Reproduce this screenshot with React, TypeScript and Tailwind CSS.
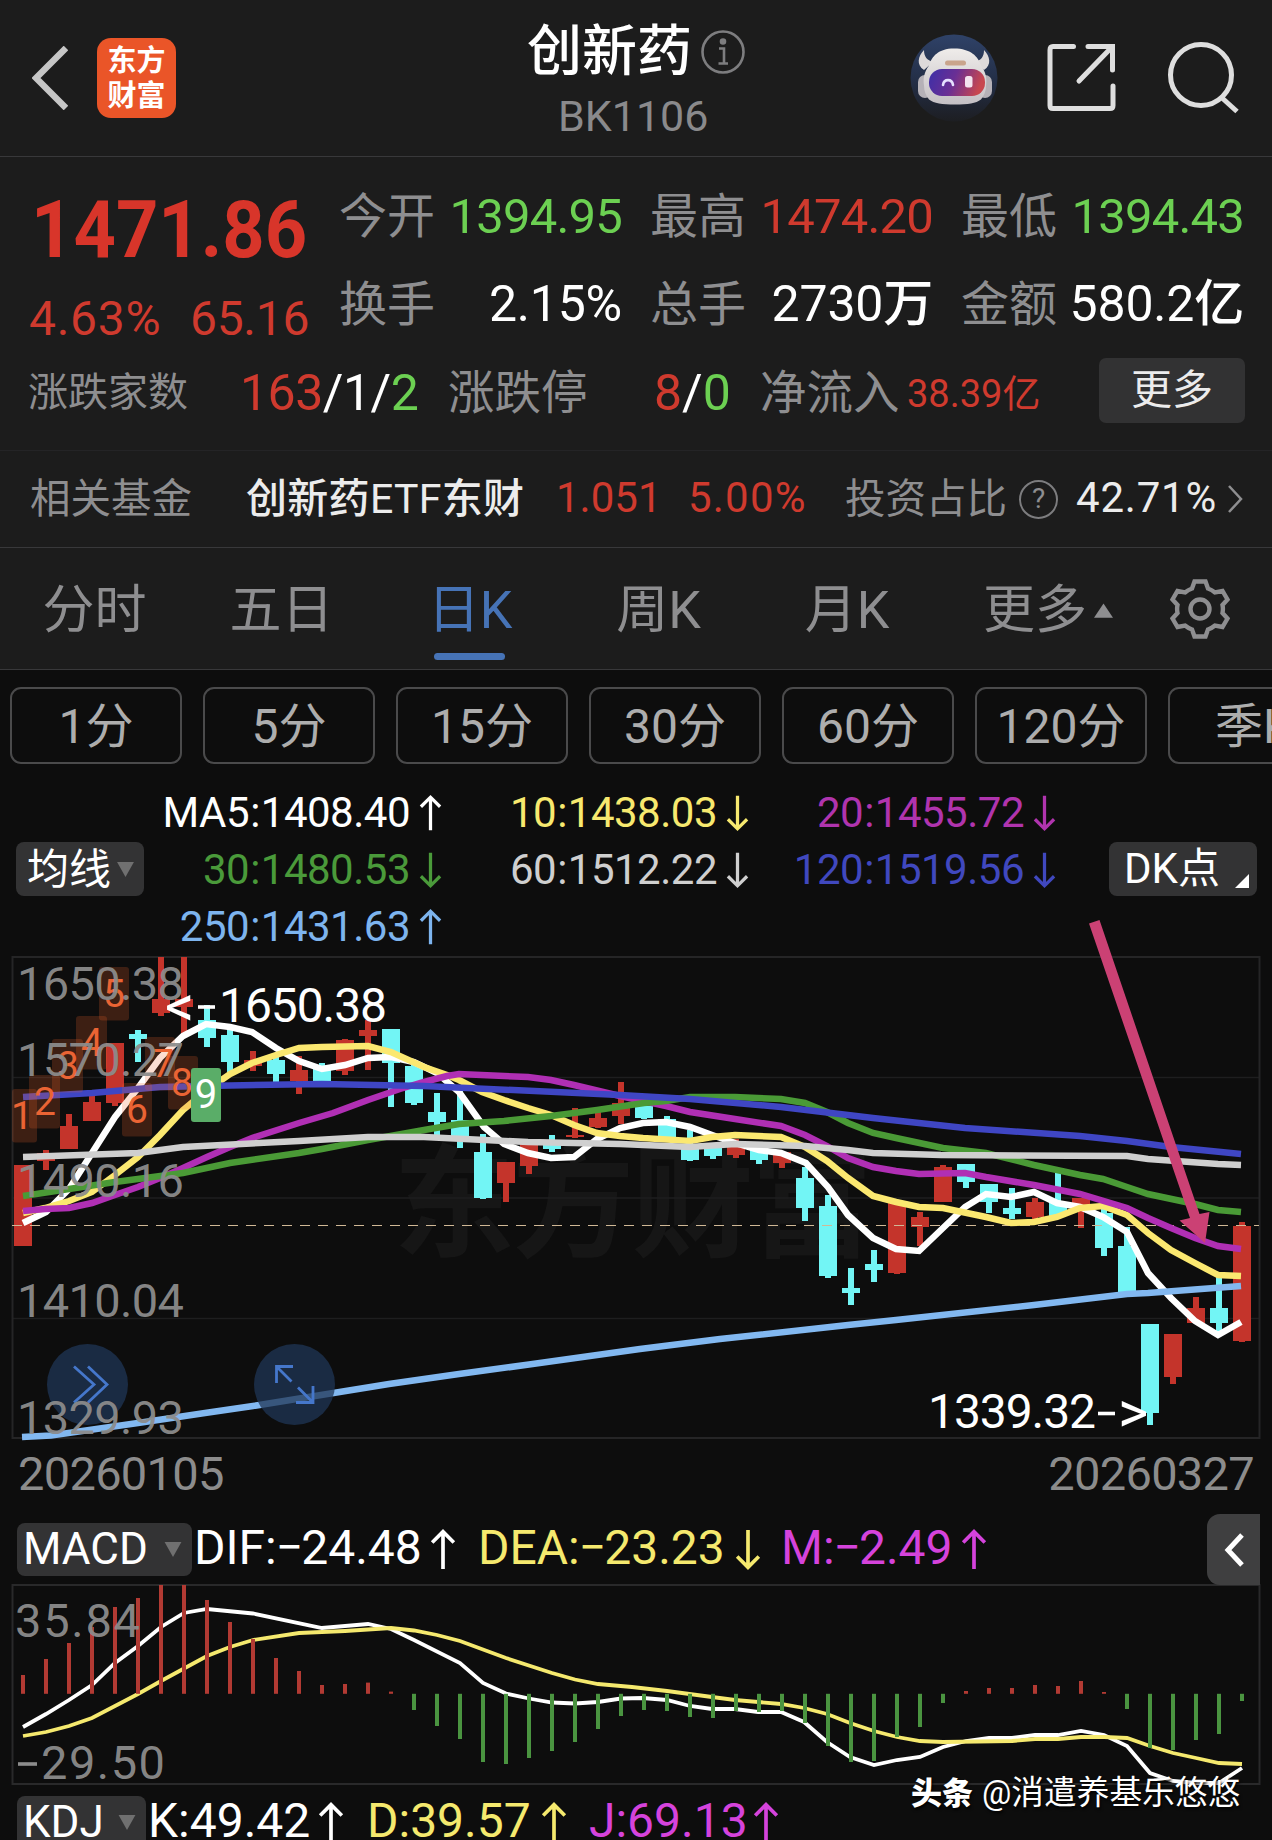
import React from "react";

/* ---------- data ---------- */

type Candle = [up: 0 | 1, high: number, top: number, bottom: number, low: number];

const STEP = 23;
const cx = (i: number) => 23 + STEP * i;

const candles: Candle[] = [
  [1, 1165, 1165, 1246, 1246], [1, 1150, 1153, 1161, 1170], [1, 1114, 1126, 1149, 1149],
  [1, 1093, 1102, 1121, 1121], [1, 1043, 1043, 1103, 1106], [0, 1030, 1034, 1039, 1062],
  [1, 957, 999, 1013, 1016], [1, 957, 999, 1007, 1035], [0, 1005, 1020, 1038, 1047],
  [0, 1026, 1035, 1062, 1072], [1, 1051, 1060, 1066, 1071], [0, 1055, 1060, 1074, 1087],
  [1, 1056, 1070, 1081, 1094], [0, 1063, 1067, 1082, 1086], [1, 1039, 1040, 1071, 1075],
  [1, 1020, 1030, 1036, 1070], [0, 1029, 1029, 1063, 1107], [0, 1065, 1066, 1103, 1105],
  [0, 1093, 1112, 1122, 1135], [0, 1087, 1120, 1137, 1148], [0, 1134, 1152, 1198, 1199],
  [1, 1162, 1162, 1183, 1202], [1, 1142, 1142, 1166, 1174], [0, 1135, 1143, 1149, 1152],
  [1, 1108, 1135, 1137, 1138], [1, 1112, 1118, 1127, 1128], [1, 1082, 1103, 1116, 1124],
  [0, 1106, 1106, 1118, 1119], [0, 1116, 1119, 1138, 1138], [0, 1130, 1147, 1160, 1161],
  [0, 1148, 1148, 1156, 1159], [1, 1139, 1141, 1155, 1158], [0, 1143, 1145, 1160, 1164],
  [1, 1151, 1152, 1163, 1168], [0, 1167, 1178, 1208, 1221], [0, 1195, 1206, 1276, 1278],
  [0, 1268, 1288, 1293, 1305], [0, 1250, 1264, 1270, 1282], [1, 1203, 1203, 1273, 1274],
  [1, 1212, 1217, 1227, 1246], [1, 1165, 1167, 1202, 1202], [0, 1164, 1164, 1182, 1188],
  [0, 1184, 1184, 1202, 1213], [0, 1188, 1208, 1214, 1219], [1, 1198, 1202, 1217, 1219],
  [0, 1172, 1202, 1216, 1217], [1, 1198, 1198, 1206, 1228], [0, 1208, 1213, 1248, 1256],
  [0, 1227, 1246, 1292, 1292], [0, 1324, 1324, 1413, 1425], [1, 1334, 1334, 1377, 1384],
  [1, 1297, 1308, 1323, 1323], [0, 1277, 1308, 1323, 1332], [1, 1222, 1226, 1341, 1342],
];

const ma: { color: string; points: string }[] = [
  { color: "#ffffff", points: "23,1223 46,1212 69,1189 92,1153 115,1117 138,1088 160,1058 183,1036 206,1024 230,1027 252,1032 276,1048 299,1061 322,1069 345,1065 368,1058 391,1057 414,1062 437,1073 459,1092 484,1127 504,1144 528,1153 551,1158 574,1157 597,1139 620,1128 643,1123 666,1122 690,1127 712,1135 735,1143 759,1150 781,1153 806,1163 828,1187 848,1215 873,1238 896,1249 919,1251 943,1228 965,1207 986,1194 1011,1197 1034,1192 1057,1203 1080,1207 1103,1217 1127,1232 1148,1273 1171,1298 1195,1321 1218,1335 1241,1322" },
  { color: "#fbe870", points: "23,1213 45,1208 69,1201 92,1192 115,1175 138,1157 160,1135 183,1110 207,1090 230,1074 252,1063 276,1055 299,1048 322,1047 368,1046 391,1052 424,1067 447,1075 459,1080 482,1092 504,1100 528,1108 551,1115 574,1125 597,1133 620,1136 643,1138 690,1141 712,1137 735,1135 781,1137 805,1147 827,1161 848,1178 873,1196 896,1202 919,1207 943,1208 986,1217 1011,1223 1034,1222 1057,1217 1080,1208 1103,1206 1127,1215 1148,1233 1171,1250 1195,1263 1218,1275 1241,1276" },
  { color: "#b02fb4", points: "23,1211 45,1209 69,1208 92,1203 115,1195 138,1187 160,1178 183,1168 207,1157 230,1147 252,1138 299,1123 333,1113 368,1100 400,1089 424,1082 447,1076 459,1074 528,1077 551,1080 574,1085 620,1096 666,1106 690,1112 735,1119 781,1126 805,1135 827,1146 848,1158 873,1167 896,1171 919,1174 965,1173 986,1177 1034,1185 1080,1194 1127,1208 1148,1218 1171,1228 1195,1238 1218,1246 1241,1249" },
  { color: "#4a9a36", points: "23,1196 69,1189 115,1182 183,1173 230,1163 299,1153 322,1149 368,1140 424,1130 459,1124 504,1121 551,1116 597,1110 644,1103 666,1101 690,1097 735,1097 781,1099 805,1103 827,1112 848,1123 873,1133 896,1138 943,1148 986,1153 1034,1165 1080,1175 1103,1179 1127,1187 1148,1194 1195,1204 1218,1210 1241,1212" },
  { color: "#cfcfcf", points: "23,1157 138,1153 183,1147 299,1141 368,1137 424,1137 528,1142 620,1144 690,1147 735,1144 805,1146 848,1150 873,1153 941,1155 1127,1156 1148,1159 1218,1164 1241,1165" },
  { color: "#3f46c4", points: "23,1097 92,1093 160,1087 230,1085.5 322,1084 424,1086 620,1095 690,1099 781,1107 848,1115 873,1118 965,1128 1080,1136 1127,1141 1171,1147 1241,1154" },
  { color: "#82b8f0", points: "22,1437 51,1435.5 138,1423 205,1413 253,1406 389,1384 459,1374 529,1364.5 640,1349 720,1339 848,1325 896,1320 1034,1305 1127,1294 1148,1293 1241,1286" },
];

const macdBars = [
  1675, 1659, 1643, 1627, 1607, 1598, 1585, 1585, 1600, 1622, 1639, 1658, 1671, 1685, 1684, 1682.6,
  1691.6, 1710, 1726, 1739, 1762, 1764, 1758, 1751, 1742, 1729, 1716, 1710, 1711, 1717, 1718, 1711,
  1712, 1711, 1723, 1746, 1762, 1761, 1737, 1727, 1703, 1691, 1688, 1688, 1685, 1686, 1681, 1692,
  1709, 1748, 1750, 1740, 1734, 1701,
];
const ZERO = 1693.8;

const dif = "23,1727 46,1714 69,1700 92,1685 115,1663 138,1646 161,1627 184,1613 207,1609 253,1613.5 322,1628 368,1624 391,1629 414,1640 460,1663 483,1683 506,1693.5 529,1698.5 552,1702.5 575,1703.5 598,1702 621,1698.5 643,1698 667,1700 690,1706 712,1709 735,1709 758,1712 781,1712 804,1722 827,1742 850,1757 874,1765 897,1760 920,1757 943,1747 966,1741 989,1738 1012,1738 1035,1735 1058,1735 1081,1731 1104,1735 1127,1746 1150,1773 1173,1781 1196,1783 1219,1783 1242,1768";
const dea = "23,1736 46,1732 69,1726 92,1718 115,1706 138,1694 161,1681 184,1668.5 207,1656 230,1647 253,1640 299,1633 345,1631 391,1628 414,1630.5 437,1635 460,1641 506,1658 552,1673 575,1679.5 598,1684 632,1687 667,1691 712,1697 735,1700 781,1704 804,1708 827,1714 850,1723 874,1731 897,1737 920,1741 943,1742 1012,1741 1035,1739 1058,1739 1081,1737 1104,1737 1127,1738 1150,1746 1173,1753 1196,1758 1219,1763 1242,1764";

const setup: { n: string; x: number; y: number; w: number; tx: number }[] = [
  { n: "1", x: 12, y: 1089, w: 25, tx: 22 },
  { n: "2", x: 29, y: 1075, w: 31, tx: 45 },
  { n: "3", x: 52, y: 1039, w: 31, tx: 68 },
  { n: "4", x: 76, y: 1016, w: 31, tx: 92 },
  { n: "5", x: 99, y: 967, w: 30, tx: 114 },
  { n: "6", x: 122, y: 1083, w: 30, tx: 137 },
  { n: "7", x: 145, y: 1037, w: 30, tx: 163 },
  { n: "8", x: 168, y: 1056, w: 30, tx: 182 },
];

/* ---------- icons ---------- */

function Arrow({ down, big }: { down?: boolean; big?: boolean }) {
  return (
    <svg
      viewBox="0 0 24 38"
      fill="none"
      stroke="currentColor"
      strokeWidth="3.4"
      className={(big ? "w-[26px] h-[43px] " : "w-[23px] h-[38px] ") + "shrink-0 " + (down ? "rotate-180" : "")}
    >
      <path d="M12 37V2.5M2 12.5 12 2.5 22 12.5" />
    </svg>
  );
}

function Robot() {
  return (
    <svg viewBox="0 0 88 88" className="h-[88px] w-[88px]">
      <defs>
        <linearGradient id="halo" x1="0" y1="0" x2="0" y2="1">
          <stop offset="0" stopColor="#2f4268" />
          <stop offset="0.6" stopColor="#222c42" />
          <stop offset="1" stopColor="#1d1e22" />
        </linearGradient>
        <linearGradient id="visor" x1="0" y1="0" x2="1" y2="0.2">
          <stop offset="0" stopColor="#3c2fa8" />
          <stop offset="0.5" stopColor="#6a2f94" />
          <stop offset="1" stopColor="#c8474f" />
        </linearGradient>
        <linearGradient id="shell" x1="0" y1="0" x2="0" y2="1">
          <stop offset="0" stopColor="#efecea" />
          <stop offset="1" stopColor="#c4c0c4" />
        </linearGradient>
      </defs>
      <circle cx="44" cy="44" r="43.5" fill="url(#halo)" />
      <path d="M14 16c-6 6-8 15 0 20l9-8c-6-2-9-5-9-12zM74 16c6 6 8 15 0 20l-9-8c6-2 9-5 9-12z" fill="#dedada" />
      <rect x="8" y="41" width="14" height="23" rx="7" fill="#b5b1b7" />
      <rect x="68" y="41" width="14" height="23" rx="7" fill="#b5b1b7" />
      <path d="M44 14.500c17 0 24 8 27 17 5 7 6 13 5 20 0 6-2 10-5 14-5 4-13 5-26 5s-21-1-26-5c-3-4-5-8-5-14-1-7 0-13 5-20 3-9 9-17 25-17z" fill="url(#shell)" />
      <rect x="35" y="26.500" width="21" height="5" rx="2.500" fill="#c9a48c" />
      <rect x="19" y="35" width="56" height="27" rx="13" fill="url(#visor)" />
      <path d="M33 51c1-6.500 9-6.500 10 0" fill="none" stroke="#e6e0ff" strokeWidth="2.600" strokeLinecap="round" />
      <rect x="55" y="42" width="7.500" height="11.500" rx="2.500" fill="#f3e4ee" />
    </svg>
  );
}

function Gear() {
  return (
    <svg viewBox="-30 -30 60 60" fill="none" stroke="#8e8e90" strokeWidth="4.4" strokeLinejoin="miter" className="h-[60px] w-[60px]">
      <path d="M-5.5-27.5H5.5L8-20.5Q12-19 15-16.500L22.500-18L27.500-9.500L22.500-4Q23.300 0 22.500 4L27.500 9.500L22.500 18L15 16.500Q12 19 8 20.500L5.500 27.500H-5.500L-8 20.500Q-12 19-15 16.500L-22.500 18L-27.500 9.500L-22.500 4Q-23.300 0-22.500-4L-27.500-9.500L-22.500-18L-15-16.500Q-12-19-8-20.500Z" />
      <circle r="9.500" />
    </svg>
  );
}

/* ---------- small pieces ---------- */

function Stat({ label, value, tone }: { label: string; value: string; tone: string }) {
  return (
    <div className="flex h-[88px] items-center justify-between pt-[2px]">
      <span className="-ml-[2px] pt-[2px] text-[48px] text-[#8e8e90]">{label}</span>
      <span className={tone}>{value}</span>
    </div>
  );
}

function Legend({ text, tone, down }: { text: string; tone: string; down?: boolean }) {
  const [name, value] = text.split(":");
  return (
    <div className={"flex h-[57px] items-center justify-end gap-[9px] pt-[2px] text-[42px] tracking-[-0.5px] " + tone}>
      <span>
        {name}
        <span className="px-[1px]">:</span>
        {value}
      </span>
      <Arrow down={down} />
    </div>
  );
}

function Minus() {
  return <span className="mr-[-2px] ml-[-1px]">−</span>;
}

function Tri({ className }: { className: string }) {
  return (
    <svg viewBox="0 0 18 16" className={className}>
      <path d="M0 0H18L9 16Z" fill="#707070" />
    </svg>
  );
}

function Header() {
  return (
    <header className="relative flex h-[157px] items-center border-b border-[#38383a] bg-[#1c1c1c]">
      <svg viewBox="0 0 36 64" fill="none" stroke="#c6c6c6" strokeWidth="6.500" className="ml-[32px] h-[64px] w-[36px]">
        <path d="M34 2 4 32 34 62" />
      </svg>
      <div className="ml-[29px] flex h-[80px] w-[79px] flex-col items-center justify-center rounded-[14px] bg-[#ea5528] pt-[2px] text-[29px] leading-[35px] font-bold text-white">
        <span>东方</span>
        <span>财富</span>
      </div>
      <div className="ml-[351px] flex w-[220px] flex-col">
        <div className="flex h-[60px] items-center pt-[5px]">
          <span className="text-[55px] font-medium text-white">创新药</span>
          <svg viewBox="0 0 44 44" fill="none" stroke="#7d7d7f" strokeWidth="2.6" className="ml-[9px] h-[44px] w-[44px]">
            <circle cx="22" cy="22" r="20.500" />
            <path d="M18 18.500H23V33M17.500 33.500H27" />
            <circle cx="22" cy="11.500" r="2" fill="#7d7d7f" />
          </svg>
        </div>
        <div className="mt-[16px] h-[42px] pl-[31px] text-[43px] text-[#8a8a8c]">BK1106</div>
      </div>
      <div className="ml-[163px]">
        <Robot />
      </div>
      <svg viewBox="0 0 70 70" fill="none" stroke="#dedede" strokeWidth="5" className="ml-[48px] h-[70px] w-[70px]">
        <path d="M27.500 3.500H7Q4 3.500 4 7V62.500Q4 65.500 7 65.500H64Q67 65.500 67 62.500V43M42 3.500H66.500V27M65 5 33 38" strokeLinecap="round" />
      </svg>
      <svg viewBox="0 0 74 74" fill="none" stroke="#dedede" strokeWidth="5" className="ml-[51px] h-[74px] w-[74px]">
        <circle cx="34" cy="34" r="30.500" />
        <path d="M54 56 70 70.500" />
      </svg>
    </header>
  );
}

function Quote() {
  const green = "text-[49px] tracking-[-0.8px] text-[#6cd052]";
  const red = "text-[49px] tracking-[-0.8px] text-[#cf3a2e]";
  const white = "text-[50px] font-[450] tracking-[-0.2px] text-white";
  return (
    <section className="h-[294px] border-b border-[#242426] bg-[#1c1c1c] pt-[14px]">
      <div className="flex h-[176px]">
        <div className="w-[341px] shrink-0 pt-[13px] pl-[31px]">
          <div className="flex h-[88px] origin-left scale-x-[0.925] items-center pt-[3px] text-[80px] font-bold text-[#d8352a]">1471.86</div>
          <div className="-ml-[2px] mt-[15px] flex h-[60px] items-center pt-[3px] text-[48px] text-[#cf3a2e]">
            <span className="w-[161px] tracking-[0.7px]">4.63%</span>
            <span className="tracking-[-0.3px]">65.16</span>
          </div>
        </div>
        <div className="grid w-[903px] grid-cols-3 gap-x-[30px]">
          <Stat label="今开" value="1394.95" tone={green} />
          <Stat label="最高" value="1474.20" tone={red} />
          <Stat label="最低" value="1394.43" tone={green} />
          <Stat label="换手" value="2.15%" tone={white} />
          <Stat label="总手" value="2730万" tone={white} />
          <Stat label="金额" value="580.2亿" tone={white} />
        </div>
      </div>
      <div className="flex h-[88px] items-center pt-[3px] pl-[28px] whitespace-nowrap text-[#8e8e90]">
        <span className="w-[212px] pt-[1px] text-[40px]">涨跌家数</span>
        <span className="w-[208px] text-[50px] tracking-[-0.5px] text-white">
          <span className="text-[#cf3a2e]">163</span>/1/<span className="text-[#6cd052]">2</span>
        </span>
        <span className="w-[206px] pt-[1px] text-[46.500px]">涨跌停</span>
        <span className="w-[106px] text-[50px] text-white">
          <span className="text-[#cf3a2e]">8</span>/<span className="text-[#6cd052]">0</span>
        </span>
        <span className="w-[147px] pt-[1px] text-[46.500px]">净流入</span>
        <span className="w-[192px] pt-[2px] text-[38px] text-[#cf3a2e]">38.39亿</span>
        <button className="-mt-[4px] h-[65px] w-[146px] rounded-[7px] bg-[#323233] text-[41px] text-[#ececec]">更多</button>
      </div>
    </section>
  );
}

function Fund() {
  return (
    <section className="flex h-[97px] items-center border-b border-[#38383a] bg-[#1c1c1c] pl-[30px] whitespace-nowrap">
      <span className="w-[216px] text-[40.500px] text-[#8e8e90]">相关基金</span>
      <span className="w-[310px] text-[41px] font-[450] tracking-[0.3px] text-[#ececec]">创新药ETF东财</span>
      <span className="-mt-[3px] w-[132px] text-[42px] text-[#cf3a2e]">1.051</span>
      <span className="-mt-[3px] w-[157px] text-[42px] tracking-[1.200px] text-[#cf3a2e]">5.00%</span>
      <span className="w-[174px] text-[40.500px] text-[#8e8e90]">投资占比</span>
      <span className="flex h-[39px] w-[39px] items-center justify-center rounded-full border-[2.500px] border-[#7d7d7f] text-[28px] text-[#8e8e90]">?</span>
      <span className="-mt-[3px] ml-[18px] w-[151px] text-[42px] font-[450] tracking-[0.8px] text-[#ececec]">42.71%</span>
      <svg viewBox="0 0 16 28" fill="none" stroke="#8e8e90" strokeWidth="2.500" className="h-[28px] w-[16px]">
        <path d="M2 1 14 14 2 27" />
      </svg>
    </section>
  );
}

function Tabs() {
  return (
    <nav className="flex h-[122px] items-center border-b border-[#38383a] bg-[#1c1c1c] text-center text-[52px] text-[#8e8e90]">
      <span className="w-[189px] pt-[4px]">分时</span>
      <span className="w-[182px] pt-[4px] pl-[3px]">五日</span>
      <span className="relative w-[198px] pt-[4px] text-[#4673b6]">
        日K
        <i className="absolute top-[72px] left-[63px] h-[7px] w-[71px] rounded-full bg-[#4673b6]" />
      </span>
      <span className="w-[179px] pt-[4px]">周K</span>
      <span className="w-[198px] pt-[4px]">月K</span>
      <span className="flex w-[206px] items-center justify-center gap-[7px] pt-[4px] pr-[2px]">
        更多
        <svg viewBox="0 0 20 15" className="h-[15px] w-[19px]">
          <path d="M10 0 20 15H0Z" fill="#8e8e90" />
        </svg>
      </span>
      <span className="ml-[18px]">
        <Gear />
      </span>
    </nav>
  );
}

function Periods() {
  return (
    <div className="flex h-[114px] items-start gap-[21px] overflow-hidden pt-[17px] pl-[10px]">
      {["1分", "5分", "15分", "30分", "60分", "120分", "季K"].map((p) => (
        <span
          key={p}
          className="flex h-[77px] w-[172px] shrink-0 items-center justify-center rounded-[11px] border-2 border-[#4a4a4b] pt-[2px] text-[48px] text-[#adadad]"
        >
          {p}
        </span>
      ))}
    </div>
  );
}

function Averages() {
  return (
    <section className="flex h-[170px] items-center pl-[16px]">
      <div className="flex h-[54px] w-[128px] shrink-0 items-center rounded-[8px] bg-[#333334] pt-[1px] pl-[11px] text-[42px] text-white">
        均线
        <Tri className="ml-[6px] h-[15px] w-[17px]" />
      </div>
      <div className="grid grid-cols-[298px_307px_307px]">
        <Legend text="MA5:1408.40" tone="text-white" />
        <Legend text="10:1438.03" tone="text-[#f7e96f]" down />
        <Legend text="20:1455.72" tone="text-[#b034ae]" down />
        <Legend text="30:1480.53" tone="text-[#4a9a3a]" down />
        <Legend text="60:1512.22" tone="text-[#cfcfcf]" down />
        <Legend text="120:1519.56" tone="text-[#4048bf]" down />
        <Legend text="250:1431.63" tone="text-[#7db4ee]" />
      </div>
      <div className="relative ml-[53px] flex h-[54px] w-[148px] shrink-0 items-center rounded-[8px] bg-[#333334] pl-[15px] text-[42px] text-white">
        DK点
        <svg viewBox="0 0 14 14" className="absolute right-[8px] bottom-[8px] h-[14px] w-[14px]">
          <path d="M14 0V14H0Z" fill="#fff" />
        </svg>
      </div>
    </section>
  );
}

function KChart() {
  return (
    <svg viewBox="0 954 1272 488" className="relative block h-[488px] w-[1272px] overflow-visible">
      <text x="393" y="1247" fontSize="122" fontWeight="700" fill="#161616" textLength="480">东方财富</text>
      <g stroke="#1e1e1f" strokeWidth="2" fill="none">
        <path d="M13 1077.500H1259M13 1198H1259M13 1318.500H1259" strokeWidth="1.500" />
        <rect x="12.500" y="957" width="1247" height="481" stroke="#252526" />
      </g>
      {candles.map(([up, high, top, bottom, low], i) => (
        <g key={i} fill={up ? "#c4342b" : "#72f5f5"}>
          <rect x={cx(i) - 3} y={high} width="6" height={low - high} />
          <rect x={cx(i) - 9} y={top} width="18" height={bottom - top} />
        </g>
      ))}
      <path d="M12 1225.500H1259" stroke="#d0b896" strokeWidth="1.200" strokeDasharray="10 8" />
      {ma.map((m) => (
        <polyline key={m.color} points={m.points} fill="none" stroke={m.color} strokeWidth="6.500" />
      ))}
      {setup.map((s) => (
        <g key={s.n}>
          <rect x={s.x} y={s.y} width={s.w} height="53.500" rx="3" fill="#f0642a" fillOpacity="0.210" />
          <text x={s.tx} y={s.y + 40} fontSize="39" textAnchor="middle" fill="#ea6434">{s.n}</text>
        </g>
      ))}
      <rect x="191" y="1068" width="30" height="54" rx="3" fill="#5aad68" />
      <text x="206" y="1108" fontSize="40" textAnchor="middle" fill="#fff">9</text>

      <g fill="#1f3556" fillOpacity="0.750">
        <circle cx="87.500" cy="1384.500" r="40.500" />
        <circle cx="294.500" cy="1384.500" r="40.500" />
      </g>
      <g fill="none" stroke="#4577cb" strokeWidth="2.800">
        <path d="M74 1366.500 94 1384.500 74 1402.500M88 1366.500 107 1384.500 88 1402.500" />
        <path d="M293 1366.500H276.500V1383M277 1367 291.500 1381.500M296 1402.500H313V1386M312.500 1402 298 1387.500" />
      </g>

      <g fontSize="47" fill="#8c8c8c" fillOpacity="0.950">
        <text x="17" y="1000" textLength="167">1650.38</text>
        <text x="17" y="1076" textLength="167">1570.27</text>
        <text x="17" y="1197" textLength="167">1490.16</text>
        <text x="17" y="1317" textLength="167">1410.04</text>
        <text x="17" y="1434" textLength="167">1329.93</text>
      </g>
      <g fontSize="48" fill="#fff">
        <text x="165" y="1026" fontSize="58">&lt;</text>
        <path d="M198 1007H215" stroke="#fff" strokeWidth="3.600" />
        <text x="219" y="1022" textLength="168">1650.38</text>
        <text x="928" y="1428" textLength="168">1339.32</text>
        <path d="M1098 1413.500H1115" stroke="#fff" strokeWidth="3.600" />
        <text x="1118" y="1432" fontSize="58">&gt;</text>
      </g>
      <path d="M1089 923.500 1099.500 920 1199.500 1214 1209.500 1212 1205 1243 1179.500 1220.500 1190 1218Z" fill="#cb4174" />
    </svg>
  );
}

function Indicator({ children, name, width }: { children: React.ReactNode; name: string; width: string }) {
  return (
    <div className="flex h-[70px] items-center pl-[17px] text-[48px] whitespace-nowrap">
      <div className={"flex h-[53px] shrink-0 items-center justify-between rounded-[8px] bg-[#333334] pr-[10px] pl-[6px] text-[44px] text-white " + width}>
        {name}
        <Tri className="mt-[1px] h-[15px] w-[18px]" />
      </div>
      {children}
    </div>
  );
}

function Macd() {
  return (
    <svg viewBox="0 1584 1272 203" className="block h-[203px] w-[1272px]">
      <rect x="12.500" y="1585" width="1247" height="199" fill="none" stroke="#29292a" strokeWidth="2" />
      <polyline points={dif} fill="none" stroke="#fff" strokeWidth="3.800" />
      <polyline points={dea} fill="none" stroke="#f5e96e" strokeWidth="3.800" />
      {macdBars.map((v, i) => (
        <rect
          key={i}
          x={cx(i) - 2}
          y={Math.min(v, ZERO)}
          width="4"
          height={Math.abs(v - ZERO)}
          fill={v < ZERO ? "#b23a33" : "#4a9440"}
        />
      ))}
      <g fontSize="47" fill="#8c8c8c" fillOpacity="0.950">
        <text x="15" y="1637" textLength="125">35.84</text>
        <path d="M18 1764H37" stroke="#8c8c8c" strokeWidth="3.600" />
        <text x="41" y="1779" textLength="124">29.50</text>
      </g>
    </svg>
  );
}

export default function App() {
  return (
    <main className="relative h-[1840px] w-[1272px] overflow-hidden bg-[#0d0d0d] font-[Roboto,'Noto_Sans_CJK_SC',sans-serif] leading-none">
      <Header />
      <Quote />
      <Fund />
      <Tabs />
      <Periods />
      <Averages />
      <KChart />
      <div className="flex h-[63px] items-center justify-between pr-[18px] pl-[18px] text-[47px] tracking-[-0.7px] text-[#8c8c8c]">
        <span>20260105</span>
        <span>20260327</span>
      </div>
      <div className="relative mt-[9px]">
        <Indicator name="MACD" width="w-[175px]">
          <span className="-mt-[2px] ml-[2px] w-[236px] text-white">DIF:<Minus />24.48</span>
          <span className="flex w-[50px] text-white"><Arrow big /></span>
          <span className="-mt-[2px] w-[255px] -translate-x-[2px] text-[#f5e96e]">DEA:<Minus />23.23</span>
          <span className="flex w-[47px] text-[#f5e96e]"><Arrow big down /></span>
          <span className="-mt-[2px] w-[179px] -translate-x-[1px] text-[#d543dc]">M:<Minus />2.49</span>
          <span className="text-[#d543dc]"><Arrow big /></span>
        </Indicator>
        <div className="absolute top-0 right-[12px] flex h-[71px] w-[53px] items-center justify-center rounded-l-[13px] bg-[#3f3f40]">
          <svg viewBox="0 0 20 34" fill="none" stroke="#fff" strokeWidth="5" className="h-[34px] w-[20px]">
            <path d="M18 2 4 17 18 32" />
          </svg>
        </div>
      </div>
      <Macd />
      <Indicator name="KDJ" width="w-[129px]">
        <span className="-mt-[2px] ml-[2px] w-[170px] text-white">K:49.42</span>
        <span className="flex w-[49px] text-white"><Arrow big /></span>
        <span className="-mt-[2px] w-[174px] text-[#f5e96e]">D:39.57</span>
        <span className="flex w-[48px] text-[#f5e96e]"><Arrow big /></span>
        <span className="-mt-[2px] w-[164px] text-[#d543dc]">J:69.13</span>
        <span className="text-[#d543dc]"><Arrow big /></span>
      </Indicator>
      <div className="absolute top-[1777px] left-[911px] flex items-center gap-[9px] text-[32.700px] whitespace-nowrap text-white [text-shadow:1px_2px_3px_#000]">
        <span className="text-[31px] font-black">头条</span>
        <span>@消遣养基乐悠悠</span>
      </div>
    </main>
  );
}
